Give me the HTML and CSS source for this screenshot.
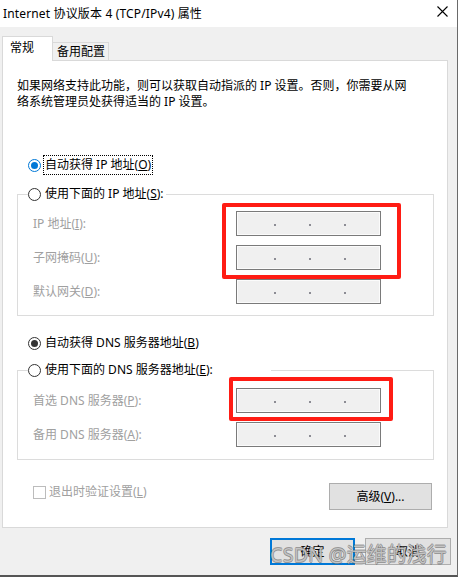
FILE: index.html
```html
<!DOCTYPE html>
<html lang="zh-CN">
<head>
<meta charset="utf-8">
<title>Internet 协议版本 4 (TCP/IPv4) 属性</title>
<link rel="stylesheet" href="styles.css">
</head>
<body>
<div class="window">
  <div class="titlebar">
    <span class="title">Internet 协议版本 4 (TCP/IPv4) 属性</span>
    <span class="close"><svg width="11" height="11" viewBox="0 0 11 11"><path d="M0.5 0.5 L10.5 10.5 M10.5 0.5 L0.5 10.5" stroke="#000" stroke-width="1.1" fill="none"/></svg></span>
  </div>
  <div class="client">
    <div class="tabs">
      <div class="tab active">常规</div>
      <div class="tab second">备用配置</div>
    </div>
    <div class="panel">
      <p class="desc">如果网络支持此功能，则可以获取自动指派的 IP 设置。否则，你需要从网<br>络系统管理员处获得适当的 IP 设置。</p>

      <div class="radio-row r1"><span class="radio on-blue"></span><span class="focus">自动获得 IP 地址(<u>O</u>)</span></div>

      <div class="group g1">
        <div class="group-head"><span class="radio"></span><span class="lbl">使用下面的 IP 地址(<u>S</u>):</span></div>
        <div class="row first"><span class="dis">IP 地址(<u>I</u>):</span><span class="field"><i></i><i></i><i></i></span></div>
        <div class="row"><span class="dis">子网掩码(<u>U</u>):</span><span class="field"><i></i><i></i><i></i></span></div>
        <div class="row"><span class="dis">默认网关(<u>D</u>):</span><span class="field"><i></i><i></i><i></i></span></div>
      </div>

      <div class="radio-row r3"><span class="radio on-dark"></span><span class="lbl">自动获得 DNS 服务器地址(<u>B</u>)</span></div>

      <div class="group g2">
        <div class="group-head wide"><span class="radio"></span><span class="lbl">使用下面的 DNS 服务器地址(<u>E</u>):</span></div>
        <div class="row first2"><span class="dis">首选 DNS 服务器(<u>P</u>):</span><span class="field"><i></i><i></i><i></i></span></div>
        <div class="row"><span class="dis">备用 DNS 服务器(<u>A</u>):</span><span class="field"><i></i><i></i><i></i></span></div>
      </div>

      <div class="bottom-row">
        <div class="check-row"><span class="checkbox"></span><span class="dis">退出时验证设置(<u>L</u>)</span></div>
        <div class="btn adv">高级(<u>V</u>)...</div>
      </div>
    </div>
    <div class="actions">
      <div class="btn ok">确定</div>
      <div class="btn cancel">取消</div>
    </div>
  </div>
  <div class="mark m1"></div>
  <div class="mark m2"></div>
  <div class="watermark">CSDN @运维的浅行</div>
</div>
</body>
</html>
```
FILE: styles.css
```css
html, body {
  margin: 0;
  padding: 0;
  background: #f0f0f0;
}
body {
  font-family: "Noto Sans", "Noto Sans CJK SC", sans-serif;
  font-size: 12px;
  color: #000;
}
u { text-decoration: underline; text-underline-offset: 1px; }

.window {
  position: relative;
  width: 458px;
  height: 577px;
  box-sizing: border-box;
  border-right: 1px solid #6a6a6a;
  border-bottom: 2px solid #555;
  background: #f0f0f0;
  display: flex;
  flex-direction: column;
  overflow: hidden;
}

.titlebar {
  flex: none;
  height: 27px;
  background: #fff;
  display: flex;
  align-items: center;
  justify-content: space-between;
  padding-left: 3px;
}
.title { line-height: 16px; letter-spacing: 0.15px; }
.close {
  width: 30px;
  height: 27px;
  display: flex;
  align-items: center;
  justify-content: center;
  margin-top: -4px;
}

.client {
  flex: 1;
  display: flex;
  flex-direction: column;
  padding: 0 6px 0 2px;
}

.tabs {
  height: 33px;
  display: flex;
  align-items: flex-end;
}
.tab {
  box-sizing: border-box;
  border: 1px solid #d9d9d9;
  border-bottom: none;
  line-height: 16px;
}
.tab.active {
  width: 51px;
  height: 25px;
  background: #fff;
  margin-bottom: -1px;
  position: relative;
  z-index: 1;
  padding: 3px 0 0 7px;
}
.tab.second {
  width: 56px;
  height: 18px;
  border-left: none;
  background: #f0f0f0;
  padding: 1px 0 0 4px;
}

.panel {
  width: 446px;
  height: 468px;
  box-sizing: border-box;
  border: 1px solid #d9d9d9;
  background: #fff;
  padding-left: 14px;
}

.desc {
  margin: 17px 0 0;
  line-height: 16px;
  white-space: nowrap;
}

.radio-row {
  display: flex;
  align-items: center;
  height: 20px;
  margin-left: 11px;
}
.r1 { margin-top: 45px; }
.r3 { margin-top: 17px; }

.radio {
  flex: none;
  width: 13px;
  height: 13px;
  box-sizing: border-box;
  border: 1px solid #333;
  border-radius: 50%;
  background: #fff;
  margin-right: 2px;
  display: flex;
  align-items: center;
  justify-content: center;
}
.radio.on-blue { border-color: #0078d7; }
.radio.on-blue::after {
  content: "";
  width: 7px;
  height: 7px;
  border-radius: 50%;
  background: #0078d7;
}
.radio.on-dark::after {
  content: "";
  width: 7px;
  height: 7px;
  border-radius: 50%;
  background: #333;
}
.lbl { padding-left: 2px; line-height: 16px; }
.focus {
  border: 1px dotted #000;
  padding: 1px 1px;
  line-height: 16px;
}

.group {
  width: 417px;
  box-sizing: border-box;
  border: 1px solid #dcdcdc;
}
.g1 { margin-top: 19px; padding-bottom: 11px; }
.g2 { margin-top: 17px; padding-bottom: 12px; }

.group-head {
  display: flex;
  align-items: center;
  width: max-content;
  height: 20px;
  margin: -11px 0 0 10px;
  background: #fff;
  padding-right: 2px;
}
.group-head.wide { padding-right: 58px; }

.row {
  display: grid;
  grid-template-columns: 203px 145px;
  align-items: center;
  height: 25px;
  margin-top: 9px;
  padding-left: 15px;
}
.row.first { margin-top: 7px; }
.row.first2 { margin-top: 8px; }

.dis { color: #a0a0a0; line-height: 16px; }

.field {
  box-sizing: border-box;
  height: 25px;
  border: 1px solid #7a7a7a;
  background: #f0f0f0;
  box-shadow: inset 0 0 0 1px #fbfbfb;
  display: flex;
  align-items: center;
  gap: 33px;
  padding: 3px 0 0 37px;
}
.field i {
  display: block;
  width: 2px;
  height: 2px;
  background: #8c8c94;
}

.bottom-row {
  width: 415px;
  margin-top: 22px;
  display: flex;
  justify-content: space-between;
  align-items: flex-start;
  box-sizing: border-box;
  padding-left: 16px;
}
.check-row {
  display: flex;
  align-items: center;
  height: 20px;
}
.checkbox {
  width: 13px;
  height: 13px;
  box-sizing: border-box;
  border: 1px solid #bcbcbc;
  background: #fff;
  margin-right: 3px;
}

.btn {
  box-sizing: border-box;
  height: 27px;
  background: #e1e1e1;
  border: 1px solid #adadad;
  display: flex;
  align-items: center;
  justify-content: center;
  line-height: 16px;
}
.btn.adv { width: 103px; margin-top: 1px; }

.actions {
  margin-top: 10px;
  display: flex;
  justify-content: flex-end;
  gap: 10px;
}
.btn.ok { width: 85px; border: 2px solid #0078d7; }
.btn.cancel { width: 86px; }

.mark {
  position: absolute;
  box-sizing: border-box;
  border: 4px solid #ff1c14;
  border-radius: 2px;
}
.m1 { left: 222px; top: 203px; width: 179px; height: 76px; }
.m2 { left: 229px; top: 377px; width: 164px; height: 44px; }

.watermark {
  position: absolute;
  left: 270px;
  top: 543px;
  font-family: "Noto Sans", "Noto Sans CJK SC", sans-serif;
  font-size: 20px;
  line-height: 24px;
  color: rgba(255, 255, 255, 0.6);
  text-shadow: 0.6px 0 0 rgba(90, 90, 90, 0.55), -0.6px 0 0 rgba(90, 90, 90, 0.55), 0 0.6px 0 rgba(90, 90, 90, 0.55), 0 -0.6px 0 rgba(90, 90, 90, 0.55);
  white-space: nowrap;
}
```
